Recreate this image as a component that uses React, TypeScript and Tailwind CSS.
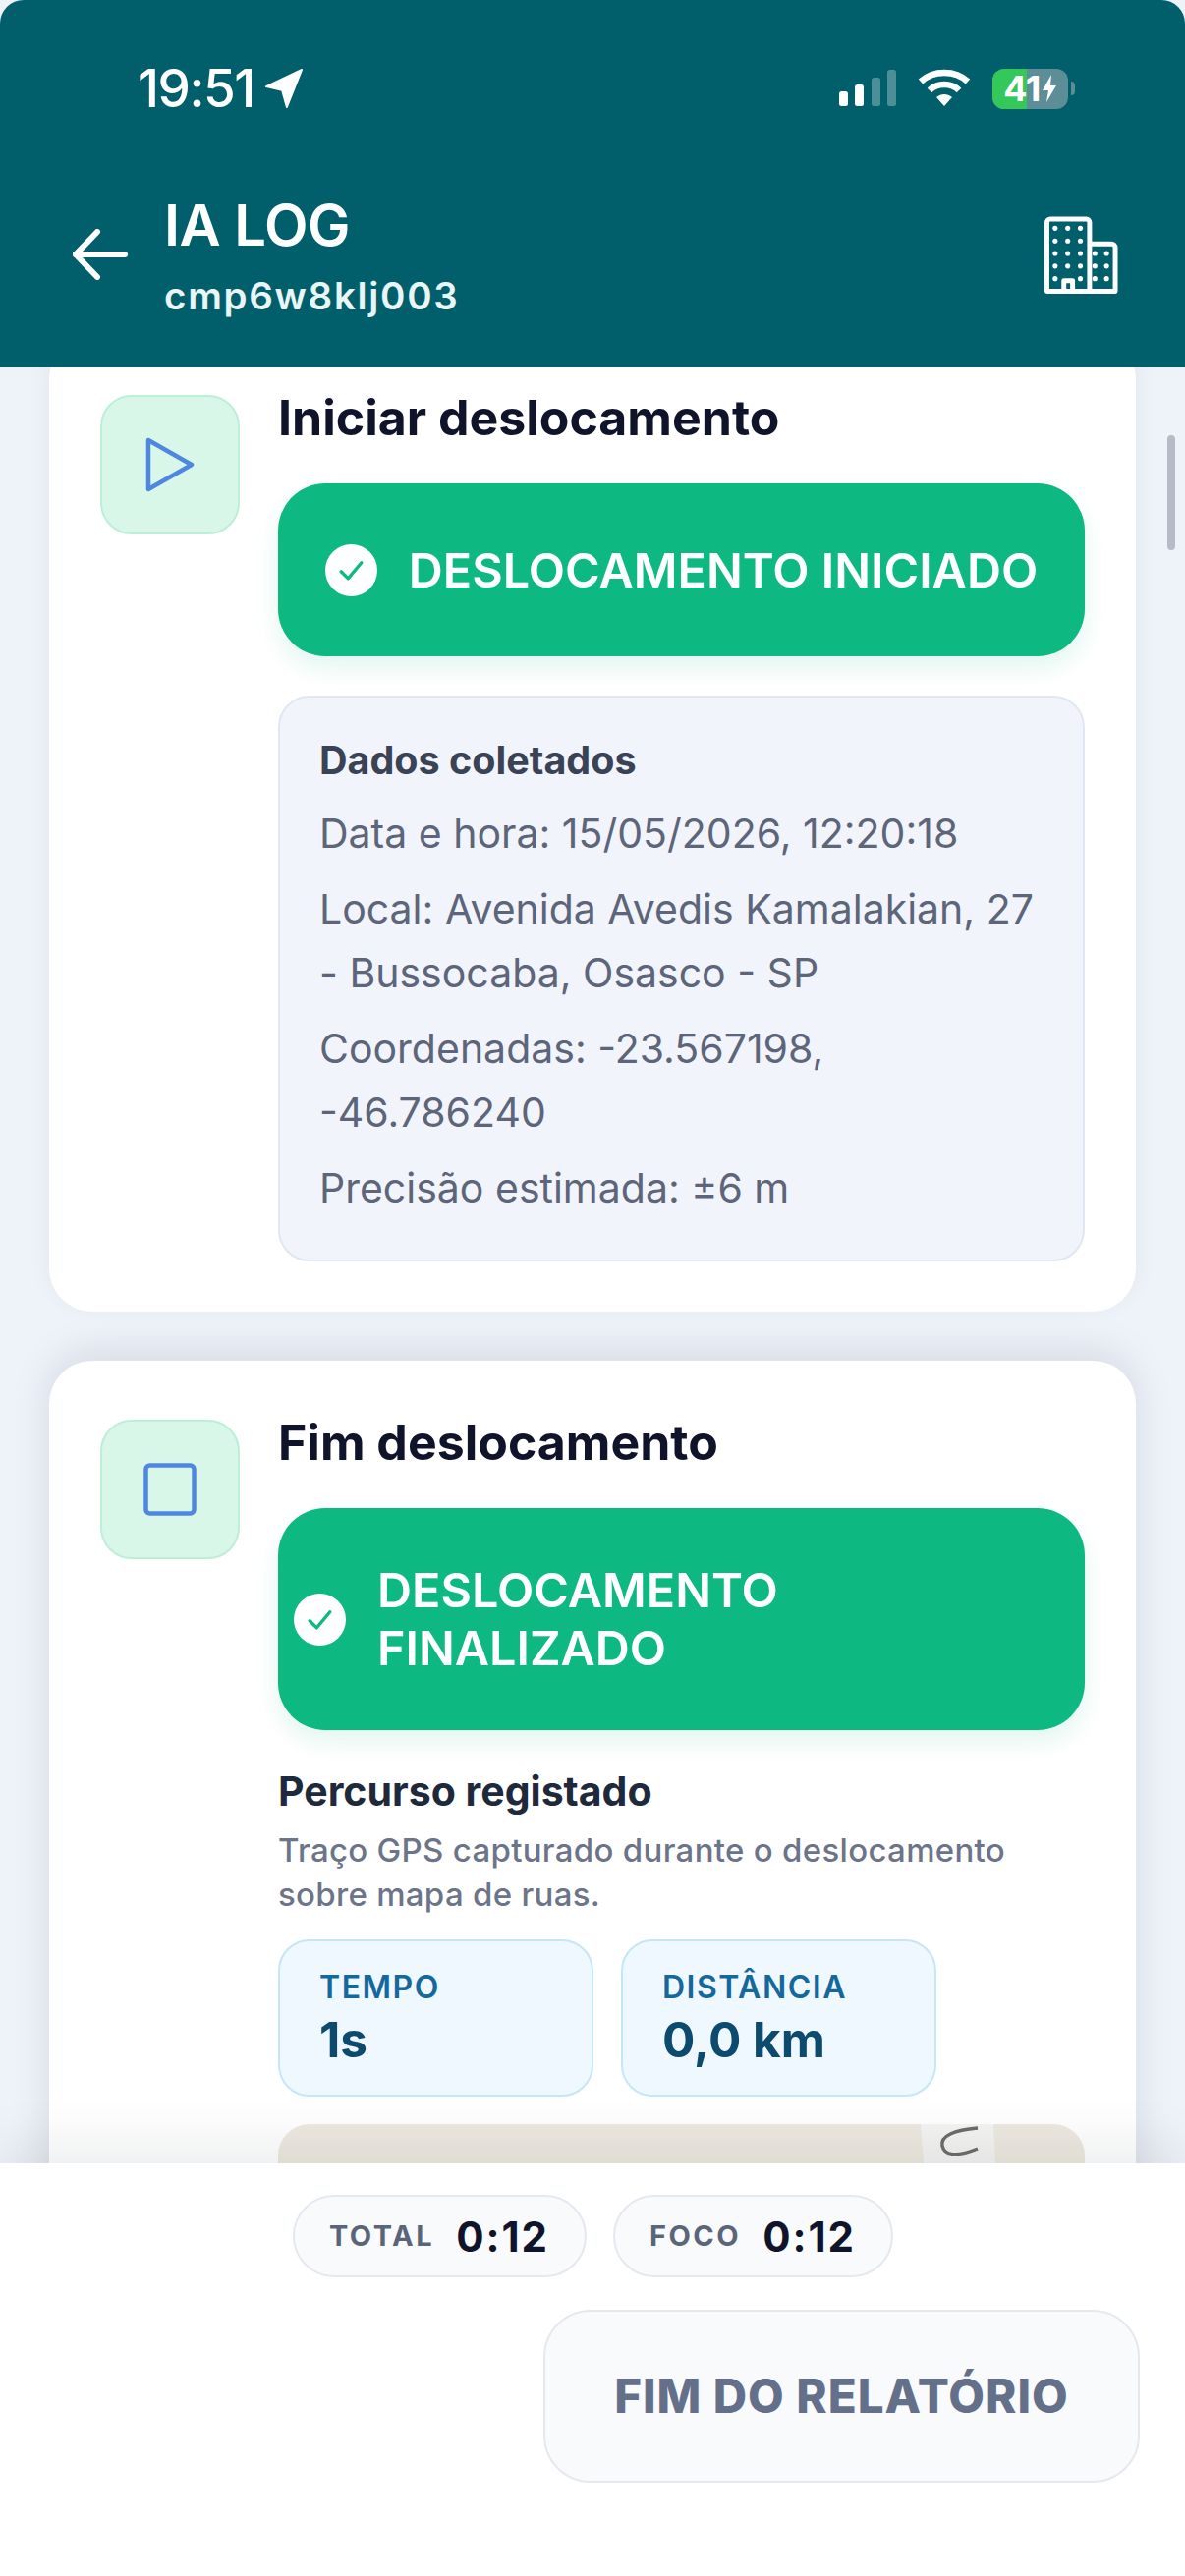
import type { ReactNode } from "react";

function LocationArrow() {
  return (
    <svg width="40" height="42" viewBox="0 0 42 44" className="ml-[10px]">
      <path d="M40 2 L24 42 L19 24 L2 20 Z" fill="white" stroke="white" strokeWidth="2" strokeLinejoin="round" />
    </svg>
  );
}

function SignalBars() {
  return (
    <svg width="58" height="38" viewBox="0 0 58 38">
      <rect x="0" y="22" width="9" height="15" rx="2.5" fill="white" />
      <rect x="16" y="15" width="9" height="22" rx="2.5" fill="white" />
      <rect x="33" y="8" width="9" height="29" rx="2.5" fill="white" fillOpacity="0.3" />
      <rect x="49" y="0" width="9" height="37" rx="2.5" fill="white" fillOpacity="0.3" />
    </svg>
  );
}

function WifiIcon() {
  return (
    <svg width="54" height="40" viewBox="0 0 54 40" fill="none" stroke="white" strokeWidth="6.5">
      <path d="M3 13 C16 1 38 1 51 13" />
      <path d="M12 22 C20 14 34 14 42 22" />
      <path d="M27 38 L19 29 C24 25 30 25 35 29 Z" fill="white" stroke="none" />
    </svg>
  );
}

function Battery() {
  return (
    <div className="flex items-center gap-[3px]">
      <div className="relative flex h-[41px] w-[77px] items-center justify-center gap-[1px] overflow-hidden rounded-[12px] bg-[#5d8e97]">
        <div className="absolute inset-y-0 left-0 w-[35px] bg-[#34c759]" />
        <span className="relative text-[36px] leading-none font-bold tracking-[-0.5px] text-white">41</span>
        <svg width="16" height="28" viewBox="0 0 16 28" className="relative">
          <path d="M10 0 L1 16 H7 L5 28 L15 11 H9 Z" fill="white" />
        </svg>
      </div>
      <div className="h-[14px] w-[4px] rounded-r-full bg-[#5d8e97]" />
    </div>
  );
}

function BuildingIcon() {
  const big = [];
  for (let r = 0; r < 5; r++) {
    for (let c = 0; c < 3; c++) {
      if (r === 4 && c === 1) continue;
      big.push(<circle key={`b${r}${c}`} cx={11 + c * 13} cy={12 + r * 13} r="2.6" fill="white" stroke="none" />);
    }
  }
  const small = [];
  for (let r = 0; r < 3; r++) {
    for (let c = 0; c < 2; c++) {
      small.push(<circle key={`s${r}${c}`} cx={52 + c * 12} cy={38 + r * 13} r="2.6" fill="white" stroke="none" />);
    }
  }
  return (
    <svg width="75" height="80" viewBox="0 0 76 80" fill="none" stroke="white" strokeWidth="5" strokeLinejoin="round" className="mb-[3px]">
      <path d="M2.5 77 V6 a3.5 3.5 0 0 1 3.5 -3.5 H43 a3.5 3.5 0 0 1 3.5 3.5 V77 Z" />
      <path d="M46.5 28 H69 a4 4 0 0 1 4 4 V77 H2.5" />
      <path d="M20 77 V66 H29 V77" />
      {big}
      {small}
    </svg>
  );
}

function CheckBadge() {
  return (
    <span className="flex h-[53px] w-[53px] shrink-0 items-center justify-center rounded-full bg-white">
      <svg width="31" height="31" viewBox="0 0 24 24" fill="none" stroke="#10b981" strokeWidth="2.6" strokeLinecap="round" strokeLinejoin="round">
        <path d="M4 13 L9.5 18.5 L20 6" />
      </svg>
    </span>
  );
}

function StepCard({ icon, title, className, children }: { icon: ReactNode; title: string; className?: string; children: ReactNode }) {
  return (
    <section className={`flex gap-[39px] rounded-[44px] bg-white pt-[60px] pr-[52px] pb-[51px] pl-[52px] shadow-[0_-6px_24px_rgba(15,23,42,0.06)] ${className ?? ""}`}>
      <div className="flex h-[142px] w-[142px] shrink-0 items-center justify-center rounded-[32px] border-2 border-[#bdeed8] bg-[#d8f7e8]">
        {icon}
      </div>
      <div className="min-w-0 flex-1">
        <h2 className="text-[50px] leading-[46px] font-bold text-[#10142b]">{title}</h2>
        {children}
      </div>
    </section>
  );
}

function DoneButton({ label, className }: { label: string; className?: string }) {
  return (
    <div className={`flex items-center justify-center gap-[32px] rounded-[48px] bg-[#0db981] px-[16px] shadow-[0_12px_24px_rgba(15,185,129,0.12)] ${className ?? ""}`}>
      <CheckBadge />
      <span className="text-[48.5px] leading-[59px] font-semibold text-white">{label}</span>
    </div>
  );
}

function Stat({ label, value }: { label: string; value: string }) {
  return (
    <div className="flex h-[160px] w-[321px] flex-col justify-center rounded-[32px] border-2 border-[#c4e6f5] bg-[#eff8ff] px-[40px]">
      <span className="text-[32px] leading-[40px] font-semibold tracking-[1.5px] text-[#15689c]">{label}</span>
      <span className="mt-[4px] text-[49.5px] leading-[58px] font-bold text-[#0c4a6e]">{value}</span>
    </div>
  );
}

function TimerPill({ label, value, className }: { label: string; value: string; className?: string }) {
  return (
    <div className={`flex h-[84px] items-center justify-center gap-[22px] rounded-[42px] border-2 border-[#e5e8ee] bg-[#f8fafc] ${className ?? ""}`}>
      <span className="text-[29px] font-bold tracking-[2.5px] text-[#5b6579]">{label}</span>
      <span className="text-[42px] font-bold tracking-[2px] text-[#10142b]">{value}</span>
    </div>
  );
}

export default function App() {
  return (
    <div className="flex h-[2622px] w-[1206px] flex-col overflow-hidden bg-[#eef2f9] font-['Inter',sans-serif]">
      <header className="relative z-10 h-[374px] shrink-0 rounded-t-[24px] bg-[#005f6b] text-white">
        <div className="flex items-center justify-between pt-[62px] pr-[112px] pl-[140px]">
          <div className="flex items-center">
            <span className="text-[53px] leading-[56px] font-medium tracking-[-1.5px]">19:51</span>
            <LocationArrow />
          </div>
          <div className="flex items-center gap-[22px]">
            <SignalBars />
            <WifiIcon />
            <Battery />
          </div>
        </div>
        <div className="flex items-center justify-between pt-[80px] pr-[68px] pl-[74px]">
          <div className="flex items-center gap-[37px]">
            <svg width="56" height="52" viewBox="0 0 56 52" fill="none" stroke="white" strokeWidth="6" strokeLinecap="round" strokeLinejoin="round" className="mb-[4px]">
              <path d="M25 3 L3 26 L25 49" />
              <path d="M3 26 H53" />
            </svg>
            <div>
              <div className="text-[58px] leading-[62px] font-semibold tracking-[-0.5px]">IA LOG</div>
              <div className="mt-[18px] text-[38.5px] leading-[46px] font-semibold tracking-[1.7px] text-[#e9f5f6]">cmp6w8klj003</div>
            </div>
          </div>
          <BuildingIcon />
        </div>
      </header>

      <main className="relative h-[1828px] shrink-0 overflow-hidden px-[50px]">
        <StepCard
          className="-mt-[32px]"
          title="Iniciar deslocamento"
          icon={
            <svg width="50" height="56" viewBox="0 0 50 56" fill="none" stroke="#4f86e0" strokeWidth="4.5" strokeLinejoin="round">
              <path d="M3 3 L47 28 L3 53 Z" />
            </svg>
          }
        >
          <DoneButton label="DESLOCAMENTO INICIADO" className="mt-[44px] h-[176px]" />
          <div className="mt-[40px] rounded-[32px] border-2 border-[#e1e7f2] bg-[#f1f4fb] px-[40px] pt-[40px] pb-[40px] text-[41px] leading-[65px] text-[#5c6579]">
            <div className="text-[39.5px] leading-[48px] font-bold text-[#3a4356]">Dados coletados</div>
            <p className="mt-[18px]">Data e hora: 15/05/2026, 12:20:18</p>
            <p className="mt-[12px]">Local: Avenida Avedis Kamalakian, 27 - Bussocaba, Osasco - SP</p>
            <p className="mt-[12px]">Coordenadas: -23.567198, -46.786240</p>
            <p className="mt-[12px]">Precisão estimada: ±6 m</p>
          </div>
        </StepCard>

        <StepCard
          className="mt-[50px] shadow-[0_-10px_40px_rgba(15,23,42,0.1)]"
          title="Fim deslocamento"
          icon={
            <svg width="54" height="54" viewBox="0 0 54 54" fill="none" stroke="#4f86e0" strokeWidth="4.5">
              <rect x="2.5" y="2.5" width="49" height="49" rx="4" />
            </svg>
          }
        >
          <DoneButton label="DESLOCAMENTO FINALIZADO" className="mt-[44px] h-[226px]" />
          <h3 className="mt-[38px] text-[41px] leading-[48px] font-bold text-[#1e293b]">Percurso registado</h3>
          <p className="mt-[14px] max-w-[780px] text-[33px] leading-[45px] font-medium tracking-[0.3px] text-[#6b7488]">Traço GPS capturado durante o deslocamento sobre mapa de ruas.</p>
          <div className="mt-[23px] flex gap-[28px]">
            <Stat label="TEMPO" value="1s" />
            <Stat label="DISTÂNCIA" value="0,0 km" />
          </div>
          <div className="mt-[28px] h-[300px] rounded-[32px] bg-[#eee9e0] pl-[654px]">
            <svg width="76" height="40" viewBox="0 0 76 40">
              <path d="M0 0 H74 L76 40 H3 Z" fill="#f4f4f2" />
              <path d="M58 4 C34 6 20 12 22 22 C24 32 36 34 58 25" fill="none" stroke="#6d6d6d" strokeWidth="3.5" />
            </svg>
          </div>
        </StepCard>

        <div className="absolute top-[69px] right-[10px] h-[117px] w-[8px] rounded-full bg-[#b6bcc6]" />
      </main>

      <footer className="relative z-10 flex-1 bg-white pt-[32px] pr-[46px] shadow-[0_-20px_50px_rgba(15,23,42,0.08)]">
        <div className="flex justify-center gap-[27px] pl-[46px]">
          <TimerPill label="TOTAL" value="0:12" className="w-[299px]" />
          <TimerPill label="FOCO" value="0:12" className="w-[285px]" />
        </div>
        <div className="mt-[33px] flex justify-end">
          <div className="flex h-[176px] w-[607px] items-center justify-center rounded-[48px] border-2 border-[#e5e8ee] bg-[#f8fafc] text-[47.5px] font-extrabold tracking-[1px] text-[#64708a]">
            FIM DO RELATÓRIO
          </div>
        </div>
      </footer>
    </div>
  );
}
